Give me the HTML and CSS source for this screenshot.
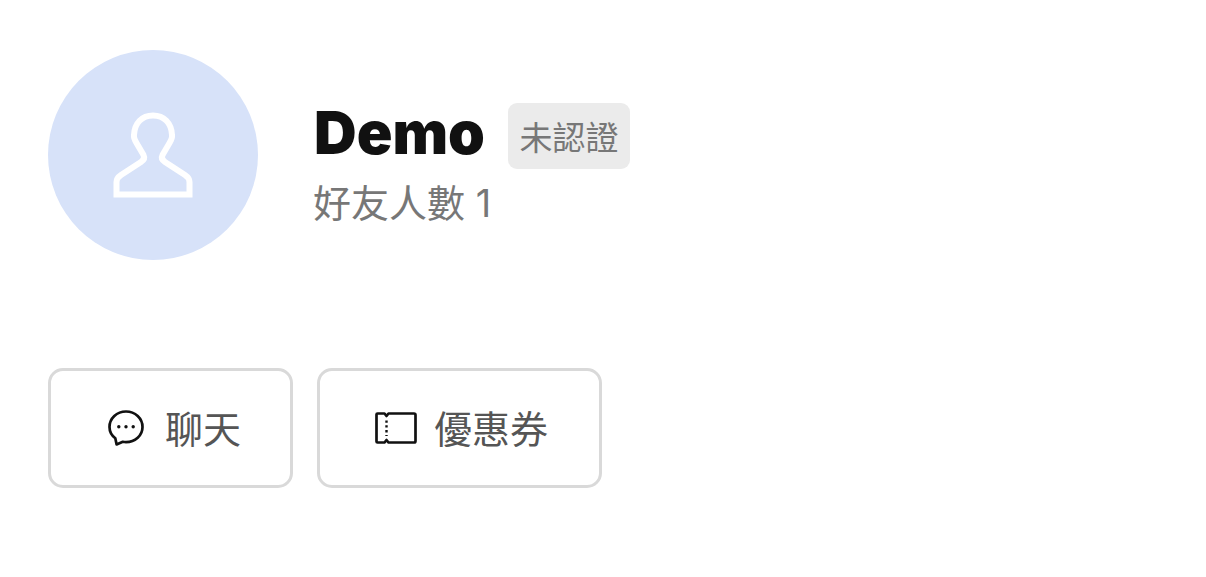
FILE: index.html
```html
<!DOCTYPE html>
<html lang="zh-Hant">
<head>
<meta charset="utf-8">
<title>Demo</title>
<link rel="stylesheet" href="styles.css">
</head>
<body>
<section class="profile">
  <div class="avatar">
    <svg class="avatar-icon" viewBox="0 0 80 86" width="80" height="86" aria-hidden="true">
      <path d="M3.500 82.500V70C3.500 67 5 65 8 63L28 50C31 48 32 46 30.500 43L23.500 31C22 28.500 20.500 26 21 23C21.500 11 29 3.500 40 3.500C51 3.500 58.500 11 59 23C59.500 26 58 28.500 56.500 31L49.500 43C48 46 49 48 52 50L72 63C75 65 76.500 67 76.500 70V82.500Z" fill="none" stroke="#fff" stroke-width="6"/>
    </svg>
  </div>
  <div class="info">
    <div class="name-row">
      <h1 class="name">Demo</h1>
      <span class="badge">未認證</span>
    </div>
    <p class="friends">好友人數 1</p>
  </div>
</section>
<nav class="actions">
  <a class="btn btn-chat">
    <svg class="icon" viewBox="0 0 36 36" width="36" height="36" aria-hidden="true">
      <path d="M18 1.500C8.800 1.500 1.500 8.500 1.500 17C1.500 21.800 3.700 25.500 7.300 28.300L8.600 34.500L14.800 31.800C15.800 32 16.900 32.100 18 32.100C27.200 32.100 34.500 25.500 34.500 17C34.500 8.500 27.200 1.500 18 1.500Z" fill="none" stroke="#111" stroke-width="2.700" stroke-linejoin="round"/>
      <circle cx="10.800" cy="16.700" r="1.700" fill="#111"/>
      <circle cx="18" cy="16.700" r="1.700" fill="#111"/>
      <circle cx="25.200" cy="16.700" r="1.700" fill="#111"/>
    </svg>
    <span class="label">聊天</span>
  </a>
  <a class="btn btn-coupon">
    <svg class="icon" viewBox="0 0 42 32" width="42" height="32" aria-hidden="true">
      <path d="M2.500 1.500H9.500L11.500 4L13.500 1.500H39C40 1.500 40.500 2 40.500 3V29C40.500 30 40 30.500 39 30.500H13.500L11.500 28L9.500 30.500H2.500C1.800 30.500 1.500 30 1.500 29.500V2.500C1.500 2 1.800 1.500 2.500 1.500Z" fill="none" stroke="#111" stroke-width="2.700" stroke-linejoin="round"/>
      <path d="M11.500 8.500V24" fill="none" stroke="#111" stroke-width="2.400" stroke-dasharray="2.300 2.500"/>
    </svg>
    <span class="label">優惠券</span>
  </a>
</nav>
</body>
</html>
```
FILE: styles.css
```css
* { box-sizing: border-box; }
html, body { margin: 0; background: #fff; }
body {
  padding: 50px 0 0 48px;
  height: 577px;
  overflow: hidden;
  font-family: Inter, "Noto Sans CJK TC", sans-serif;
}
.profile { display: flex; align-items: flex-start; gap: 56px; }
.avatar {
  width: 210px;
  height: 210px;
  flex: none;
  border-radius: 50%;
  background: #d7e2f9;
  display: flex;
  align-items: center;
  justify-content: center;
}
.avatar-icon { display: block; }
.info { display: flex; flex-direction: column; margin-top: 53px; }
.name-row { display: flex; align-items: center; gap: 23px; }
.name {
  margin: 0 0 6px;
  font-size: 59px;
  font-weight: 900;
  line-height: 60px;
  color: #111;
}
.badge {
  height: 66px;
  padding: 0 11.500px;
  display: flex;
  align-items: center;
  border-radius: 9px;
  background: #ebebeb;
  color: #777;
  font-size: 33px;
}
.friends {
  margin: 10px 0 0 -1px;
  font-size: 38px;
  line-height: 48px;
  color: #777;
}
.actions { display: flex; gap: 24px; margin-top: 108px; }
.btn {
  height: 120px;
  display: flex;
  align-items: center;
  border: 3px solid #d9d9d9;
  border-radius: 15px;
  color: #555;
  font-size: 38px;
}
.btn-chat { width: 245px; padding-left: 57px; gap: 21px; }
.btn-coupon { width: 285px; padding-left: 55px; gap: 17px; }
.icon { display: block; flex: none; }
.label { margin-bottom: 4px; }
```
